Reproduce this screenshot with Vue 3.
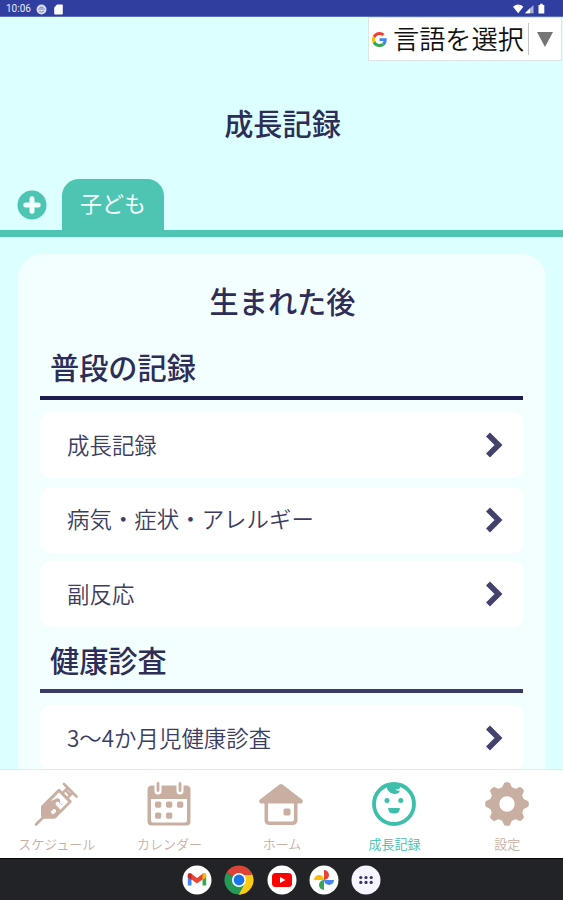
<script setup>
const sections = [
  { title: '普段の記録', rows: ['成長記録', '病気・症状・アレルギー', '副反応'] },
  { title: '健康診査', rows: ['3〜4か月児健康診査'] },
]
const tabs = [
  { id: 'syringe', label: 'スケジュール' },
  { id: 'calendar', label: 'カレンダー' },
  { id: 'home', label: 'ホーム' },
  { id: 'baby', label: '成長記録', active: true },
  { id: 'gear', label: '設定' },
]
const teeth = [0, 45, 90, 135, 180, 225, 270, 315]
</script>

<template>
  <div class="screen">
    <header class="status">
      <span class="time">10:06</span>
      <svg class="st-face" viewBox="0 0 12 12"><circle cx="6" cy="6" r="5.4" fill="#d9ddf2" /><path d="M2.5 5.5h7M3.5 8q2.5 1.6 5 0M4 3.6h4" stroke="#6975b9" fill="none" /></svg>
      <svg class="st-card" viewBox="0 0 9 11"><path d="M3 .5h5q.8 0 .8.8v8.4q0 .8-.8.8H1q-.8 0-.8-.8V3.5z" fill="#fff" /></svg>
      <svg class="st-right" viewBox="0 0 34 12">
        <path d="M1 3.7Q6.2-.7 11.4 3.7L6.2 10.2z" fill="#fff" />
        <path d="M13 10.3 21.5 2v8.3z" fill="#aab2dc" /><path d="m13 10.3 5-5v5z" fill="#fff" />
        <path d="M26.5 2h1.6V.8h2.6V2h1.6v8.6h-5.8z" fill="#fff" />
      </svg>
    </header>

    <main class="content">
      <div class="language">
        <svg class="google" viewBox="0 0 48 48">
          <path fill="#ea4335" d="M24 9.5c3.5 0 6.700 1.200 9.200 3.600l6.900-6.900C35.900 2.400 30.500 0 24 0 14.600 0 6.500 5.400 2.600 13.200l8 6.200C12.400 13.700 17.700 9.500 24 9.500z" />
          <path fill="#4285f4" d="M47 24.500c0-1.600-.2-3.100-.4-4.500H24v9h12.900c-.6 3-2.300 5.500-4.800 7.200l7.700 6C44.400 38 47 31.800 47 24.500z" />
          <path fill="#fbbc05" d="M10.500 28.600a14.500 14.500 0 0 1 0-9.200l-8-6.200a24 24 0 0 0 0 21.600z" />
          <path fill="#34a853" d="M24 48c6.500 0 12-2.100 15.900-5.800l-7.700-6c-2.200 1.500-4.900 2.300-8.200 2.300-6.300 0-11.600-4.200-13.500-9.900l-8 6.200C6.500 42.600 14.600 48 24 48z" />
        </svg>
        <span class="lang-text">言語を選択</span>
        <span class="lang-sep"></span>
        <svg class="lang-arrow" viewBox="0 0 16 15"><path d="M0 0h16L8 15z" fill="#757575" /></svg>
      </div>
      <h1 class="title">成長記録</h1>
      <div class="children">
        <svg class="add" viewBox="0 0 30 30"><circle cx="15" cy="15" r="14.500" fill="#4dc5b2" /><path d="M15 8.800v12.400M8.800 15h12.400" stroke="#f2ffff" stroke-width="5" stroke-linecap="round" /></svg>
        <div class="child">子ども</div>
      </div>

      <div class="card">
        <h2 class="card-title">生まれた後</h2>
        <section v-for="s in sections" :key="s.title" class="section">
          <h3 class="section-title">{{ s.title }}</h3>
          <div class="rows">
            <div v-for="r in s.rows" :key="r" class="row">
              <span class="row-text">{{ r }}</span>
              <svg class="chevron" viewBox="0 0 18 28"><path d="M3 3.500 13.500 14 3 24.500" fill="none" stroke="#42426a" stroke-width="5.600" /></svg>
            </div>
          </div>
        </section>
      </div>
    </main>

    <nav class="nav">
      <div v-for="t in tabs" :key="t.id" class="nav-item" :class="{ active: t.active }">
        <svg class="nav-icon" viewBox="0 0 44 44" fill="currentColor">
          <g v-if="t.id === 'syringe'">
            <path d="M30 2 42.500 14.500M33.800 5.800 28 11.600M38.700 10.700 33 16.400M32 8.500l4 4M2 42.500l8-8" fill="none" stroke="currentColor" stroke-width="2.600" stroke-linecap="round" />
            <path d="M24 7.300q1-1 2 0L37.300 18.600q1 1 0 2L22 36q-1 .8-2 .8H9.500L7 34.300V25q0-1 .8-1.800z" />
            <path d="M25 10.500 34.300 19.800 26.300 27.800 17 18.500z" fill="#fff" />
            <path d="M22.500 16.500q3.500-1 3.500 2.500-.5 2.500 2.500 3l-3.500 5-8-8z" />
            <path d="m20.200 29-1.200 1.200M26 24.200l-2.500-2.500" stroke="#fff" stroke-width="3.800" stroke-linecap="round" />
          </g>
          <g v-else-if="t.id === 'calendar'">
            <path d="M5 3.500h34q4.500 0 4.500 4.500v31.500q0 4-4 4h-35q-4 0-4-4V8q0-4.500 4.500-4.500z" />
            <path d="M4 17h36v21.500q0 2-2 2H6q-2 0-2-2z" fill="#fff" />
            <path d="M11 2.500v6.500M33 2.500v6.500" stroke="#fff" stroke-width="7" stroke-linecap="round" />
            <path d="M11 1.500v7M33 1.500v7" stroke="currentColor" stroke-width="2.800" stroke-linecap="round" />
            <g><rect x="8" y="19.500" width="6.300" height="6.300" rx="1.800" /><rect x="19" y="19.500" width="6.300" height="6.300" rx="1.800" /><rect x="30" y="19.500" width="6.300" height="6.300" rx="1.800" /><rect x="8" y="30.500" width="6.300" height="6.300" rx="1.800" /><rect x="19" y="30.500" width="6.300" height="6.300" rx="1.800" /></g>
          </g>
          <g v-else-if="t.id === 'home'">
            <path d="M20.500 2.500q1.500-1.200 3 0L43 17.500q1.300 1.200.7 2.700-.5 1.300-2.200 1.300h-39q-1.700 0-2.200-1.300-.6-1.500.7-2.700z" />
            <path d="M7.300 20v18q0 3.200 3.200 3.200h23q3.200 0 3.200-3.200V20" fill="#fff" stroke="currentColor" stroke-width="3.600" />
            <path d="M5.500 18h33v3.500h-33z" />
            <rect x="24.500" y="26.500" width="7" height="7" rx="1.500" />
          </g>
          <g v-else-if="t.id === 'baby'">
            <circle cx="22" cy="22" r="20" fill="none" stroke="currentColor" stroke-width="3.800" />
            <path d="M14.500 3q.4 8 7.500 9 4.800.4 6-3.500-3.500.8-4.500-1.500 4 1.500 5-2.500L22 1z" />
            <circle cx="15" cy="18.500" r="2.500" /><circle cx="28.800" cy="18.500" r="2.500" />
            <path d="M16.200 26h11.600q.5 5.500-5.800 5.500T16.200 26z" />
          </g>
          <g v-else>
            <circle cx="22" cy="22" r="17.300" />
            <path v-for="a in teeth" :key="a" :transform="`rotate(${a} 22 22)`" d="M14.800 7q3-1.200 3.500-4.200.4-2.600 2.400-2.600h2.600q2 0 2.400 2.600.5 3 3.500 4.200z" />
            <circle cx="22" cy="22" r="7.700" fill="#fff" />
          </g>
        </svg>
        <span class="nav-label">{{ t.label }}</span>
      </div>
    </nav>

    <footer class="dock">
      <svg class="app" viewBox="0 0 30 30">
        <circle cx="15" cy="15" r="14.500" fill="#fff" />
        <path d="M5.800 11v9.500h3.700v-8z" fill="#4285f4" /><path d="M24.200 11v9.500h-3.700v-8z" fill="#34a853" />
        <path d="M5.800 10.500q0-3 3-2.200L15 13l6.200-4.700q3-.8 3 2.200v1.300L15 18.500l-9.200-6.700z" fill="#ea4335" />
        <path d="M20.500 8.800q3.700-1.700 3.700 2.200v1.200l-3.700 2.800z" fill="#fbbc04" /><path d="M5.800 12.200V10q.3-2.500 3.700-1.200V15z" fill="#c5221f" />
      </svg>
      <svg class="app" viewBox="0 0 30 30">
        <path d="M15 15 2.440 7.750A14.500 14.500 0 0 1 27.560 7.750z" fill="#db4437" />
        <path d="M15 15 2.440 7.750A14.500 14.500 0 0 0 15 29.500z" fill="#239b56" />
        <path d="M15 15 15 29.500A14.500 14.500 0 0 0 27.560 7.750z" fill="#fbcb16" />
        <path d="M15 8h12.700v2H21z" fill="#db4437" /><path d="m9 18.500 6 3.500 6-3.500-6 11z" fill="#239b56" /><path d="m21 18.500-6 11h2l8-8V10h-6z" fill="#fbcb16" />
        <circle cx="15" cy="15" r="7" fill="#fff" /><circle cx="15" cy="15" r="5.400" fill="#1a73e8" />
      </svg>
      <svg class="app" viewBox="0 0 30 30"><circle cx="15" cy="15" r="14.500" fill="#fff" /><rect x="5" y="8" width="20" height="14" rx="3.500" fill="#f00" /><path d="m13 12 5.500 3-5.500 3z" fill="#fff" /></svg>
      <svg class="app" viewBox="0 0 30 30">
        <circle cx="15" cy="15" r="14.500" fill="#fff" />
        <path d="M15 15V5a5 5 0 0 1 0 10z" fill="#ea4335" />
        <path d="M15 15H5a5 5 0 0 1 10 0z" fill="#fbbc04" />
        <path d="M15 15h10a5 5 0 0 1-10 0z" fill="#4285f4" />
        <path d="M15 15v10a5 5 0 0 1 0-10z" fill="#34a853" />
      </svg>
      <svg class="app" viewBox="0 0 30 30">
        <circle cx="15" cy="15" r="14.500" fill="#f5f4ff" />
        <g fill="#343365"><circle cx="9.800" cy="12.500" r="1.600" /><circle cx="15" cy="12.500" r="1.600" /><circle cx="20.200" cy="12.500" r="1.600" /><circle cx="9.800" cy="17.400" r="1.600" /><circle cx="15" cy="17.400" r="1.600" /><circle cx="20.200" cy="17.400" r="1.600" /></g>
      </svg>
    </footer>
  </div>
</template>

<style>
body { margin: 0; overflow: hidden; }
</style>

<style scoped>
.screen {
  width: 563px;
  height: 900px;
  display: flex;
  flex-direction: column;
  overflow: hidden;
  color: #2d2d58;
  font-family: "Noto Sans CJK JP", sans-serif;
}
svg { display: block; flex: none; }
h1, h2, h3 { margin: 0; font-weight: 500; font-size: 29.200px; line-height: 40px; }
.status {
  box-sizing: border-box;
  height: 17px;
  flex: none;
  display: flex;
  align-items: center;
  padding: 2px 17px 0 6px;
  background: #303f9f;
  border-bottom: 1px solid #5b72b4;
  color: #e7e9f7;
}
.time { width: 30px; font: 10px/14px Roboto, sans-serif; }
.st-face { width: 11px; height: 11px; }
.st-card { width: 9px; height: 11px; margin-left: 7px; }
.st-right { width: 34px; height: 12px; margin-left: auto; }
.content {
  flex: 1;
  min-height: 0;
  overflow: hidden;
  display: flex;
  flex-direction: column;
  background: #dcffff;
}
.language {
  box-sizing: border-box;
  width: 194px;
  height: 44px;
  margin-left: 368px;
  flex: none;
  display: flex;
  align-items: center;
  padding: 0 7px 0 3px;
  background: #fff;
  border: 1px solid #dce5e5;
}
.google { width: 15px; height: 15px; margin-right: 6px; }
.lang-text { font-size: 26.200px; line-height: 36px; color: #111; width: 132px; white-space: nowrap; padding-bottom: 3px; font-weight: 350; }
.lang-sep { width: 1px; height: 32px; margin-left: 3px; background: #c4c4c4; }
.lang-arrow { width: 16px; height: 15px; margin-left: 8px; }
.title { margin-top: 41px; padding-left: 2px; flex: none; text-align: center; }
.children {
  height: 52px;
  flex: none;
  margin-top: 36px;
  display: flex;
  padding-left: 17px;
  border-bottom: 7px solid #4dc5b2;
}
.add { width: 30px; height: 30px; margin-top: 12px; }
.child {
  width: 102px;
  height: 51px;
  margin-top: 1px;
  margin-left: 15px;
  border-radius: 17px 17px 0 0;
  background: #4dc5b2;
  color: #f4ffff;
  text-align: center;
  font-size: 22px;
  line-height: 46px;
}
.card {
  margin: 17px 17px 0 18px;
  padding: 26px 22px 0;
  flex: 1 0 auto;
  border-radius: 24px 24px 0 0;
  background: #f3ffff;
}
.card-title { text-align: center; padding-left: 1px; }
.section { padding-top: 26px; }
.section + .section { padding-top: 12px; }
.section-title { padding-left: 10px; padding-bottom: 10px; margin-right: 1px; border-bottom: 4px solid #1d1d51; }
.section + .section .section-title { border-color: #3a3b65; }
.rows { display: flex; flex-direction: column; gap: 8.500px; padding-top: 12px; }
.row {
  height: 66px;
  display: flex;
  align-items: center;
  justify-content: space-between;
  padding: 0 21px 0 27px;
  border-radius: 12px;
  background: #fff;
  color: #3d3d63;
  font-size: 22.450px;
  font-weight: 350;
  line-height: 32px;
}
.row-text { padding-bottom: 3px; }
.chevron { width: 18px; height: 28px; }
.nav {
  box-sizing: border-box;
  height: 89px;
  flex: none;
  display: grid;
  grid-template-columns: repeat(5, 1fr);
  border-top: 1px solid #e7e9e3;
  background: #fff;
}
.nav-item { display: flex; flex-direction: column; align-items: center; padding-top: 12px; color: #c9afa2; }
.nav-icon { width: 44px; height: 44px; overflow: visible; }
.nav-label { margin-top: 9px; padding-left: 1px; font-size: 13px; line-height: 18px; font-weight: 350; white-space: nowrap; }
.active { color: #3dbfab; }
.dock {
  box-sizing: border-box;
  height: 42px;
  flex: none;
  display: flex;
  align-items: center;
  justify-content: center;
  gap: 12.200px;
  background: #222327;
  border-top: 1px solid #08080a;
}
.app { width: 30px; height: 30px; }
</style>
